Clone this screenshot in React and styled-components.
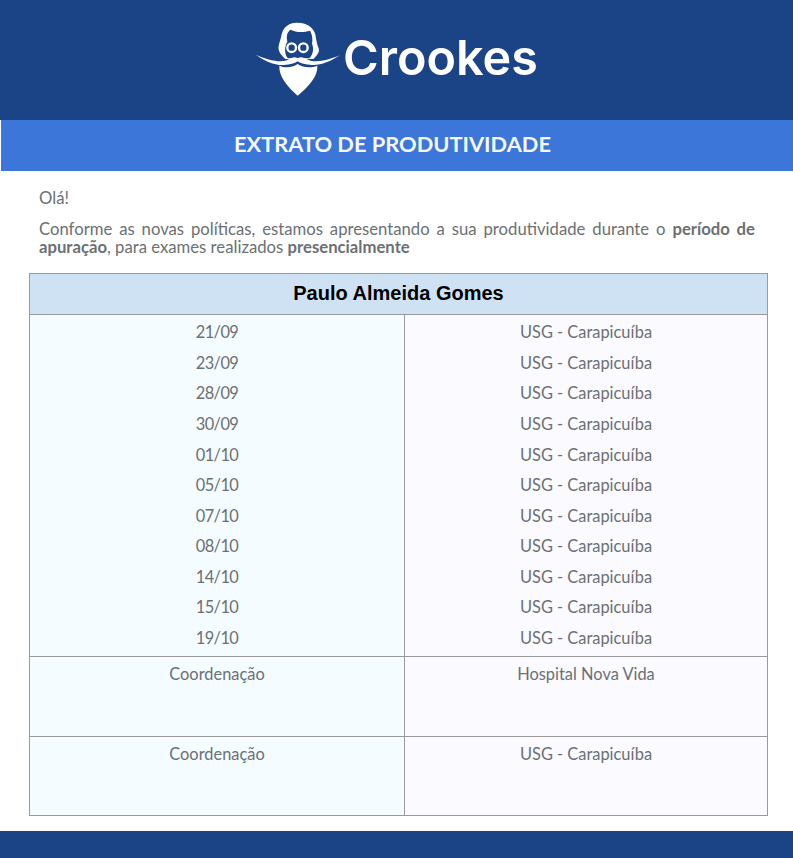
import React from 'react'
import styled, { createGlobalStyle } from 'styled-components'

const GlobalStyle = createGlobalStyle`
  html, body {
    margin: 0;
    padding: 0;
    background: #fff;
  }
`

const COLOR = {
  navy: '#1b4487',
  blue: '#3c76d9',
  text: '#6c7073',
  line: '#9a9a9a',
}

const Page = styled.div`
  width: 793px;
  height: 858px;
  overflow: hidden;
  display: flex;
  flex-direction: column;
  font-family: 'Lato', 'Open Sans', sans-serif;
  color: ${COLOR.text};
`

const Header = styled.header`
  height: 120px;
  background: ${COLOR.navy};
  display: flex;
  justify-content: center;
  align-items: flex-start;
  padding-top: 15px;
  padding-right: 5px;
  box-sizing: border-box;
`

const Brand = styled.div`
  display: flex;
  align-items: flex-start;
`

const BrandName = styled.span`
  margin: 14px 0 0 -2px;
  font-family: 'Inter', sans-serif;
  font-weight: 600;
  font-size: 48.5px;
  line-height: 58px;
  color: #fff;
`

const TitleBar = styled.h1`
  margin: 0 0 0 1px;
  height: 51px;
  background: ${COLOR.blue};
  color: #f4f7fd;
  font-size: 21.8px;
  font-weight: 700;
  line-height: 48px;
  text-align: center;
  padding-right: 9px;
`

const Content = styled.main`
  padding: 18px 38px 0 39px;
  font-size: 16.7px;
  line-height: 18px;
`

const Paragraph = styled.p`
  margin: 0 0 13px;
  text-align: ${(p) => (p.$justify ? 'justify' : 'left')};
`

const Table = styled.table`
  width: 738px;
  height: 542px;
  margin: 4px 0 15px 29px;
  border-collapse: collapse;
  table-layout: fixed;
  font-size: 16.4px;
`

const NameCell = styled.th`
  height: 38px;
  padding: 0 0 2px;
  border: 1px solid ${COLOR.line};
  background: #cfe2f3;
  color: #000;
  font-family: 'Liberation Sans', Arial, sans-serif;
  font-size: 20px;
  font-weight: 700;
  text-align: center;
`

const Cell = styled.td`
  padding: 8px 0 0;
  height: ${(p) => p.$height || 71}px;
  border: 1px solid ${COLOR.line};
  background: ${(p) => (p.$side === 'left' ? '#f5fcff' : '#fafaff')};
  text-align: center;
  vertical-align: top;
  line-height: 18px;
`

const ListCell = styled(Cell)`
  padding: 2.4px 0 2.6px;
  height: 336px;
`

const ListLine = styled.div`
  line-height: 30.55px;
`

const DateLine = styled(ListLine)`
  letter-spacing: -0.6px;
`

const Footer = styled.footer`
  flex: 1;
  background: ${COLOR.navy};
`

const rows = ['21/09', '23/09', '28/09', '30/09', '01/10', '05/10', '07/10', '08/10', '14/10', '15/10', '19/10']
const extras = [
  { role: 'Coordenação', place: 'Hospital Nova Vida', height: 71 },
  { role: 'Coordenação', place: 'USG - Carapicuíba', height: 70 },
]

function LogoMark() {
  return (
    <svg width="95" height="85" viewBox="0 0 285 255" aria-hidden="true">
      <path
        fill="#fff"
        d="M143 23C118 22 100 36 95 58C92 76 84 90 86 103C88 116 98 124 106 132L190 132C200 122 210 112 206 100C201 90 199 76 196 58C190 36 168 23 143 23Z"
      />
      <path
        fill="#1b4487"
        d="M112 80C108 62 112 50 122 44C140 54 162 52 180 47C188 60 188 76 186 86C192 100 190 118 178 130L114 130C104 120 102 96 112 80Z"
      />
      <circle cx="125" cy="98" r="13" fill="#1b4487" stroke="#fff" strokeWidth="7" />
      <circle cx="160" cy="98" r="13" fill="#1b4487" stroke="#fff" strokeWidth="7" />
      <path
        fill="#fff"
        d="M18 119C50 134 84 142 106 137C120 133 130 121 143 130C156 121 168 133 182 137C206 142 240 134 270 121C240 140 210 152 186 150C166 148 152 146 143 139C134 146 120 148 102 150C76 152 44 138 18 119Z"
      />
      <path
        fill="#fff"
        d="M88 152C106 160 126 158 143 147C160 158 182 160 202 152C204 184 176 214 143 242C112 214 86 184 88 152Z"
      />
    </svg>
  )
}

export default function App() {
  return (
    <Page>
      <GlobalStyle />
      <Header>
        <Brand>
          <LogoMark />
          <BrandName>Crookes</BrandName>
        </Brand>
      </Header>
      <TitleBar>EXTRATO DE PRODUTIVIDADE</TitleBar>
      <Content>
        <Paragraph>Olá!</Paragraph>
        <Paragraph $justify>
          Conforme as novas políticas, estamos apresentando a sua produtividade durante o{' '}
          <strong>período de apuração</strong>, para exames realizados <strong>presencialmente</strong>
        </Paragraph>
      </Content>
      <Table>
        <colgroup>
          <col width="375" />
          <col width="363" />
        </colgroup>
        <thead>
          <tr>
            <NameCell colSpan={2}>Paulo Almeida Gomes</NameCell>
          </tr>
        </thead>
        <tbody>
          <tr>
            <ListCell $side="left">
              {rows.map((d) => (
                <DateLine key={d}>{d}</DateLine>
              ))}
            </ListCell>
            <ListCell $side="right">
              {rows.map((d) => (
                <ListLine key={d}>USG - Carapicuíba</ListLine>
              ))}
            </ListCell>
          </tr>
          {extras.map((row) => (
            <tr key={row.place}>
              <Cell $side="left" $height={row.height}>{row.role}</Cell>
              <Cell $side="right" $height={row.height}>{row.place}</Cell>
            </tr>
          ))}
        </tbody>
      </Table>
      <Footer />
    </Page>
  )
}
